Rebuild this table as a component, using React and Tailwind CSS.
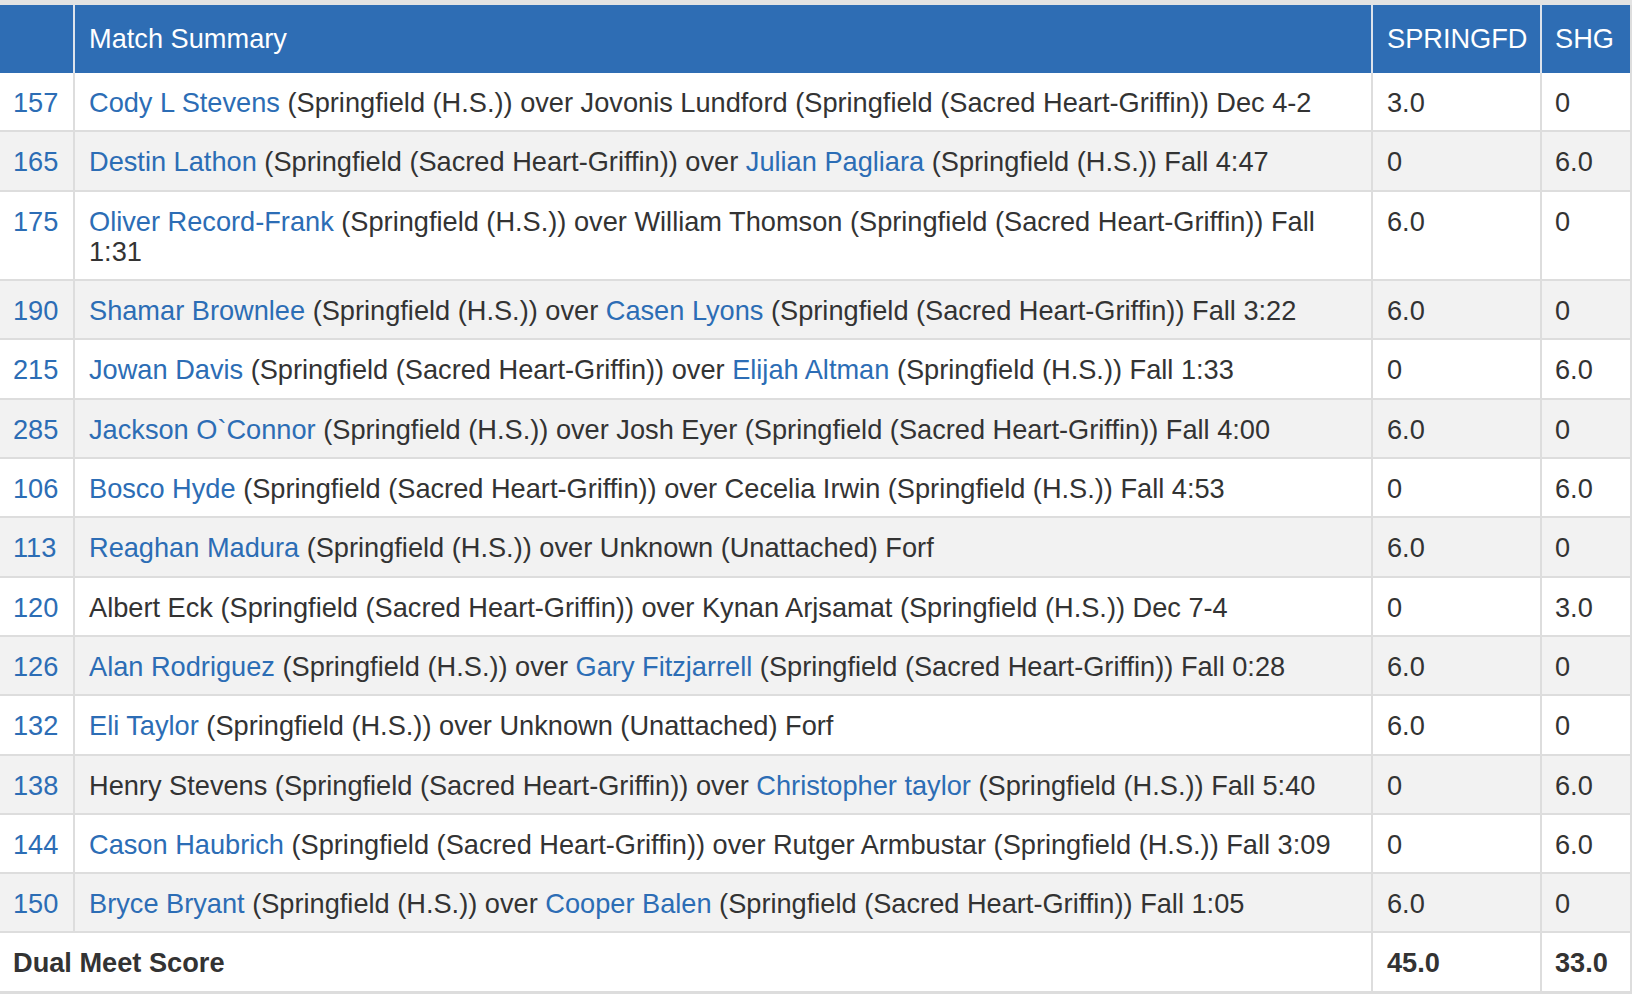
import React from "react";

const L = ({ children }) => <span className="text-[#2c6db5]">{children}</span>;

const rows = [
  ["157", <><L>Cody L Stevens</L> (Springfield (H.S.)) over Jovonis Lundford (Springfield (Sacred Heart-Griffin)) Dec 4-2</>, "3.0", "0"],
  ["165", <><L>Destin Lathon</L> (Springfield (Sacred Heart-Griffin)) over <L>Julian Pagliara</L> (Springfield (H.S.)) Fall 4:47</>, "0", "6.0"],
  ["175", <><L>Oliver Record-Frank</L> (Springfield (H.S.)) over William Thomson (Springfield (Sacred Heart-Griffin)) Fall 1:31</>, "6.0", "0"],
  ["190", <><L>Shamar Brownlee</L> (Springfield (H.S.)) over <L>Casen Lyons</L> (Springfield (Sacred Heart-Griffin)) Fall 3:22</>, "6.0", "0"],
  ["215", <><L>Jowan Davis</L> (Springfield (Sacred Heart-Griffin)) over <L>Elijah Altman</L> (Springfield (H.S.)) Fall 1:33</>, "0", "6.0"],
  ["285", <><L>Jackson O`Connor</L> (Springfield (H.S.)) over Josh Eyer (Springfield (Sacred Heart-Griffin)) Fall 4:00</>, "6.0", "0"],
  ["106", <><L>Bosco Hyde</L> (Springfield (Sacred Heart-Griffin)) over Cecelia Irwin (Springfield (H.S.)) Fall 4:53</>, "0", "6.0"],
  ["113", <><L>Reaghan Madura</L> (Springfield (H.S.)) over Unknown (Unattached) Forf</>, "6.0", "0"],
  ["120", <>Albert Eck (Springfield (Sacred Heart-Griffin)) over Kynan Arjsamat (Springfield (H.S.)) Dec 7-4</>, "0", "3.0"],
  ["126", <><L>Alan Rodriguez</L> (Springfield (H.S.)) over <L>Gary Fitzjarrell</L> (Springfield (Sacred Heart-Griffin)) Fall 0:28</>, "6.0", "0"],
  ["132", <><L>Eli Taylor</L> (Springfield (H.S.)) over Unknown (Unattached) Forf</>, "6.0", "0"],
  ["138", <>Henry Stevens (Springfield (Sacred Heart-Griffin)) over <L>Christopher taylor</L> (Springfield (H.S.)) Fall 5:40</>, "0", "6.0"],
  ["144", <><L>Cason Haubrich</L> (Springfield (Sacred Heart-Griffin)) over Rutger Armbustar (Springfield (H.S.)) Fall 3:09</>, "0", "6.0"],
  ["150", <><L>Bryce Bryant</L> (Springfield (H.S.)) over <L>Cooper Balen</L> (Springfield (Sacred Heart-Griffin)) Fall 1:05</>, "6.0", "0"],
];

export default function App() {
  return (
    <div
      className="w-[1632px] h-[994px] bg-white overflow-hidden text-[27.2px] leading-[30.3px] text-[#333333]"
      style={{ fontFamily: '"Liberation Sans", Arial, sans-serif' }}
    >
      <div className="h-[5px] bg-[#e3e3e3]" />
      <table className="table-fixed border-collapse w-[1632px]">
        <colgroup>
          <col className="w-[74px]" />
          <col className="w-[1298px]" />
          <col className="w-[169px]" />
          <col className="w-[91px]" />
        </colgroup>
        <thead>
          <tr className="bg-[#2e6db4] text-white h-[68px]">
            <th className="border-r-2 border-[#dde3ec] pl-[14px] font-normal text-left"></th>
            <th className="border-r-2 border-[#dde3ec] pl-[14px] font-normal text-left">Match Summary</th>
            <th className="border-r-2 border-[#dde3ec] pl-[14px] font-normal text-left">SPRINGFD</th>
            <th className="border-r-4 border-[#dddddd] pl-[13px] font-normal text-left">SHG</th>
          </tr>
        </thead>
        <tbody>
          {rows.map(([w, s, a, b], i) => (
            <tr key={i} className={i % 2 === 1 ? "bg-[#f2f2f2]" : "bg-white"}>
              <td className="border-b-2 border-r-2 border-[#dddddd] pl-[13px] pt-[15px] pb-[12px] align-top text-[#2c6db5]">{w}</td>
              <td className="border-b-2 border-r-2 border-[#dddddd] pl-[14px] pr-[14px] pt-[15px] pb-[12px] align-top">{s}</td>
              <td className="border-b-2 border-r-2 border-[#dddddd] pl-[14px] pt-[15px] pb-[12px] align-top">{a}</td>
              <td className="border-b-2 border-r-4 border-[#dddddd] pl-[13px] pt-[15px] pb-[12px] align-top">{b}</td>
            </tr>
          ))}
          <tr className="bg-white font-bold">
            <td colSpan={2} className="border-b-4 border-r-2 border-[#dddddd] pl-[13px] pt-[15px] pb-[12px]">Dual Meet Score</td>
            <td className="border-b-4 border-r-2 border-[#dddddd] pl-[14px] pt-[15px] pb-[12px]">45.0</td>
            <td className="border-b-4 border-r-4 border-[#dddddd] pl-[13px] pt-[15px] pb-[12px]">33.0</td>
          </tr>
        </tbody>
      </table>
    </div>
  );
}
